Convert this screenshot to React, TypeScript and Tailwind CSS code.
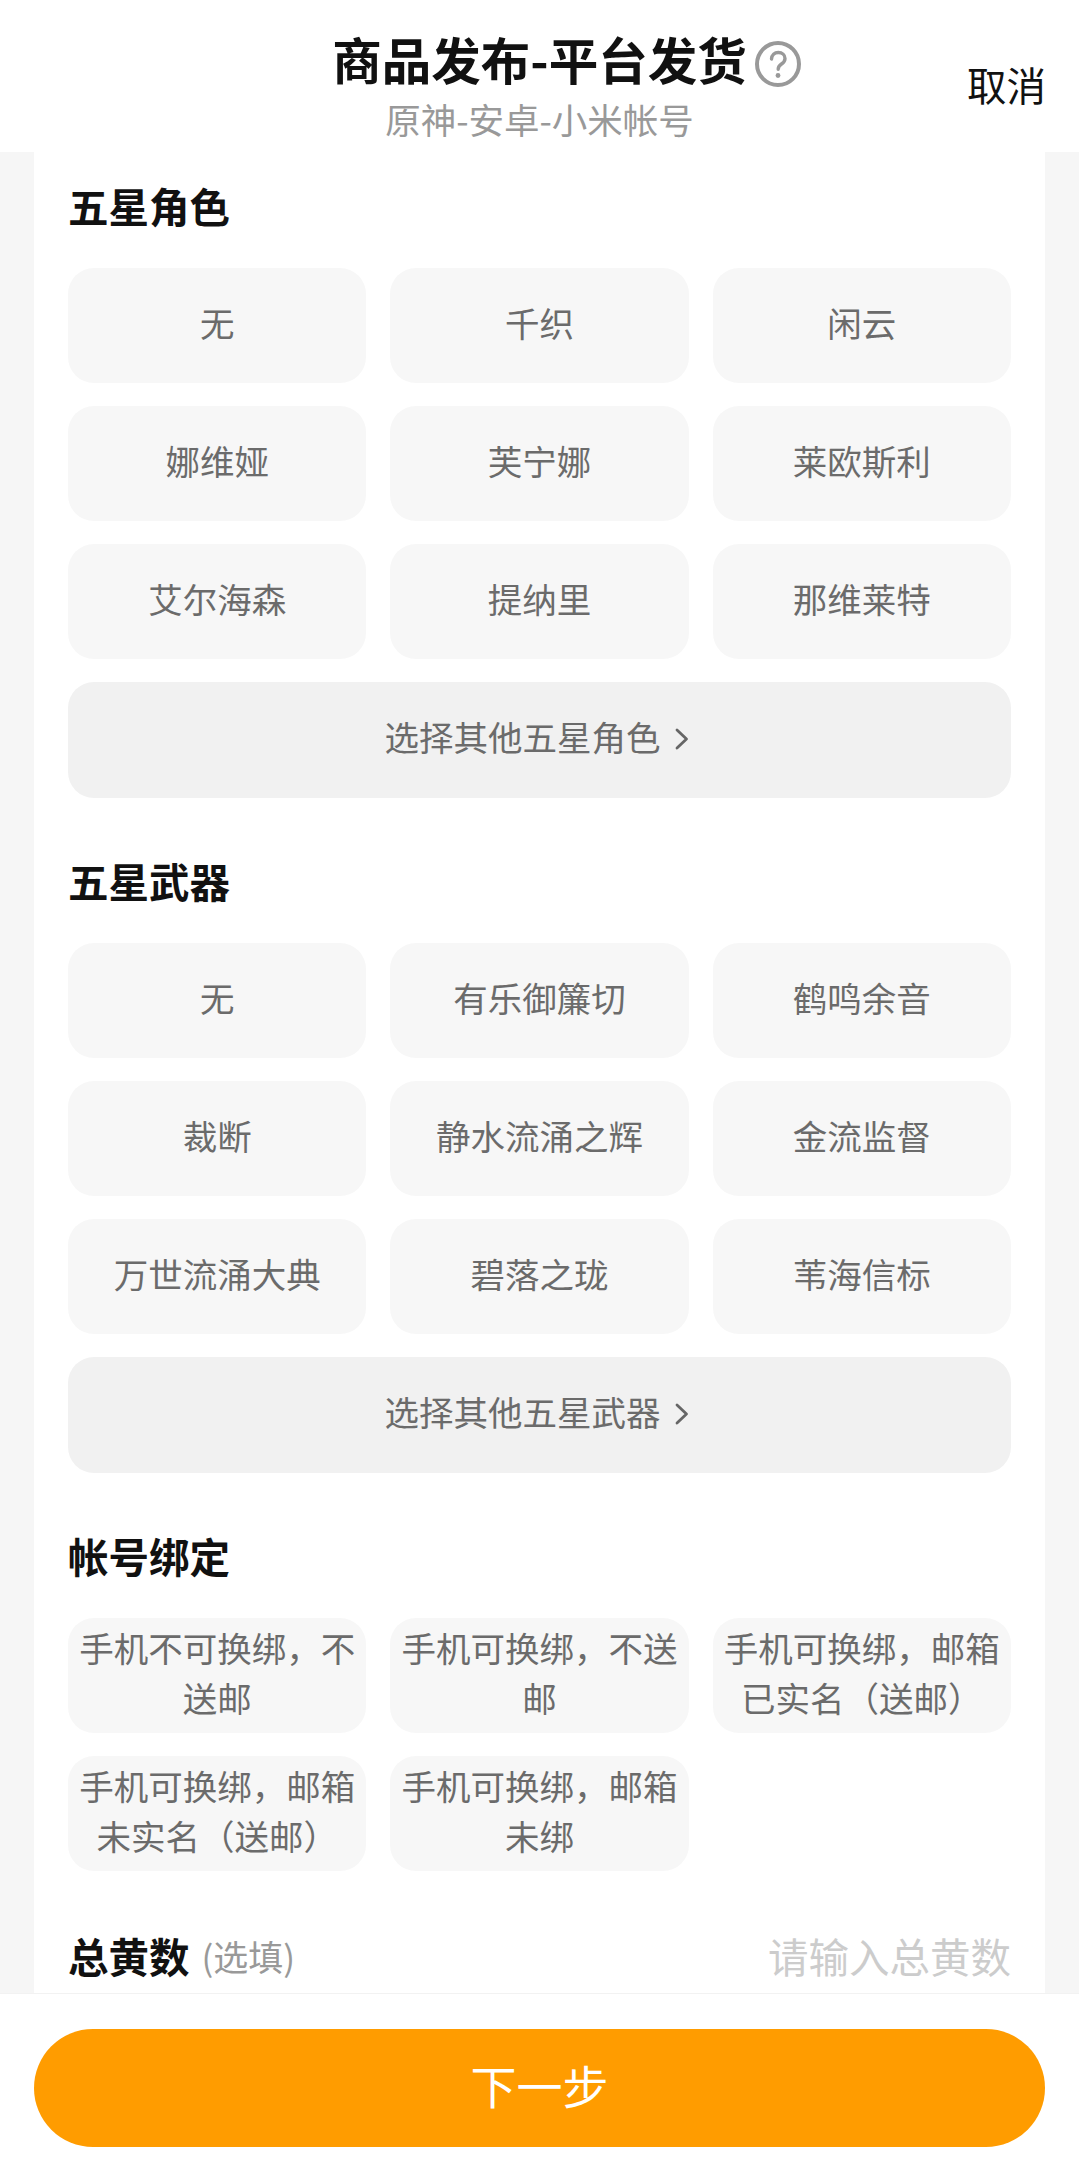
import React from 'react';

const FONT = 'font-["Noto_Sans_CJK_SC","Noto_Sans",sans-serif]';

const Chevron = () => (
  <svg width="14" height="22" viewBox="0 0 14 22" fill="none" className="ml-[14px] mr-[6px] mt-[4px]">
    <path d="M2 2l9.5 9L2 20" stroke="#666" strokeWidth="2.8" strokeLinecap="round" strokeLinejoin="round" />
  </svg>
);

const Tile = ({ label }: { label: string }) => (
  <div className="h-[115px] rounded-[26px] bg-[#f7f7f7] px-[8px] pb-[7px] flex items-center justify-center text-center text-[34.5px] leading-[50px] text-[#6b6b6b]">
    {label}
  </div>
);

const Section = ({ title, items, more }: { title: string; items: string[]; more?: string }) => (
  <section className="mb-[57px]">
    <h2 className="h-[56px] text-[40.5px] leading-[52px] font-bold text-[#111]">{title}</h2>
    <div className="mt-[32px] grid grid-cols-3 gap-x-[24px] gap-y-[23px]">
      {items.map((item) => (
        <Tile key={item} label={item} />
      ))}
      {more && (
        <button className="col-span-3 h-[116px] rounded-[26px] bg-[#f1f1f1] pb-[7px] flex items-center justify-center text-[34.5px] text-[#6b6b6b]">
          {more}
          <Chevron />
        </button>
      )}
    </div>
  </section>
);

export default function App() {
  return (
    <div className={`${FONT} h-[2176px] w-[1079px] flex flex-col overflow-hidden bg-white`}>
      <header className="relative h-[152px] shrink-0 flex flex-col items-center pt-[25px]">
        <div className="relative">
          <h1 className="text-[49.5px] leading-[68px] font-bold text-[#111]">商品发布-平台发货</h1>
          <svg width="46" height="46" viewBox="0 0 46 46" fill="none" className="absolute left-[calc(100%+8px)] top-[16px]">
            <circle cx="23" cy="23" r="21" stroke="#999" strokeWidth="4" />
            <path d="M16.500 18c.3-4 3-6.500 6.800-6.500 3.900 0 6.700 2.500 6.700 5.900 0 2.700-1.500 4.200-3.500 5.600-2 1.400-3.300 2.600-3.300 5.200" stroke="#999" strokeWidth="3.400" strokeLinecap="round" />
            <circle cx="23" cy="34.500" r="2.400" fill="#999" />
          </svg>
        </div>
        <p className="text-[35.5px] leading-[46px] mt-[3px] text-[#999]">原神-安卓-小米帐号</p>
        <button className="absolute right-[33px] top-[58px] text-[39.5px] leading-[52px] text-[#111]">取消</button>
      </header>

      <main className="flex-1 min-h-0 bg-[#f6f6f6] px-[34px]">
        <div className="h-full bg-white px-[34px] pt-[28px]">
          <Section
            title="五星角色"
            items={['无', '千织', '闲云', '娜维娅', '芙宁娜', '莱欧斯利', '艾尔海森', '提纳里', '那维莱特']}
            more="选择其他五星角色"
          />
          <Section
            title="五星武器"
            items={['无', '有乐御簾切', '鹤鸣余音', '裁断', '静水流涌之辉', '金流监督', '万世流涌大典', '碧落之珑', '苇海信标']}
            more="选择其他五星武器"
          />
          <Section
            title="帐号绑定"
            items={['手机不可换绑，不送邮', '手机可换绑，不送邮', '手机可换绑，邮箱已实名（送邮）', '手机可换绑，邮箱未实名（送邮）', '手机可换绑，邮箱未绑']}
          />
          <div className="flex h-[56px] items-center justify-between">
            <div className="flex items-center">
              <span className="text-[40.5px] font-bold text-[#111]">总黄数</span>
              <span className="ml-[12px] text-[35px] text-[#999]">(选填)</span>
            </div>
            <span className="text-[40.5px] text-[#ccc]">请输入总黄数</span>
          </div>
        </div>
      </main>

      <footer className="h-[183px] shrink-0 bg-white border-t border-[#f2f2f2] px-[34px] pt-[35px]">
        <button className="h-[118px] w-full rounded-full bg-[#ff9c00] pb-[8px] text-[46px] text-white">下一步</button>
      </footer>
    </div>
  );
}
